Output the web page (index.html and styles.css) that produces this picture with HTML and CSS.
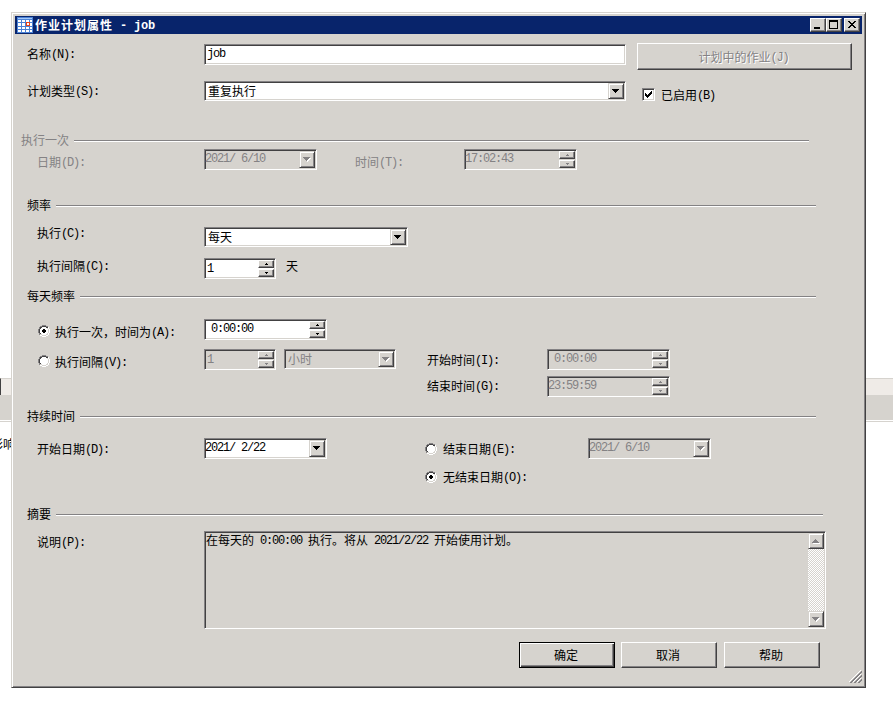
FILE: index.html
```
<!DOCTYPE html>
<html lang="zh-CN">
<head>
    <meta charset="UTF-8">
    <title>作业计划属性 - job</title>
    <link rel="stylesheet" href="styles.css">
</head>
<body>

<!-- window behind the dialog -->
<div class="backdrop">
    <div class="back-header"></div>
    <div class="back-bar"></div>
    <div class="back-text">影响</div>
</div>

<!-- shared glyphs -->
<svg class="defs">
    <symbol id="down" viewBox="0 0 8 5"><path d="M0 0h7v1H0zM1 1h5v1H1zM2 2h3v1H2zM3 3h1v1H3z"/></symbol>
    <symbol id="up" viewBox="0 0 8 5"><path d="M3 0h1v1H3zM2 1h3v1H2zM1 2h5v1H1zM0 3h7v1H0z"/></symbol>
    <symbol id="tiny-up" viewBox="0 0 3 2"><path d="M1 0h1v1H1zM0 1h3v1H0z"/></symbol>
    <symbol id="tiny-down" viewBox="0 0 3 2"><path d="M0 0h3v1H0zM1 1h1v1H1z"/></symbol>
    <symbol id="radio" viewBox="0 0 12 12">
        <path fill="#fff" d="M4 1h4v1h2v2h1v4h-1v2H8v1H4v-1H2V8H1V4h1V2h2z"/>
        <path fill="#848284" d="M4 0h4v1H4zM2 1h2v1H2zM8 1h2v1H8zM1 2h1v2H1zM0 4h1v4H0zM1 8h1v2H1z"/>
        <path fill="#424142" d="M4 1h4v1H4zM2 2h2v1H2zM8 2h2v1H8zM2 3h1v1H2zM1 4h1v4H1zM2 8h1v1H2z"/>
        <path fill="#d6d3ce" d="M9 3h1v1H9zM10 4h1v4h-1zM9 8h1v1H9zM8 9h2v1H8zM4 10h4v1H4zM2 9h2v1H2z"/>
        <path fill="#fff" d="M10 2h1v2h-1zM11 4h1v4h-1zM10 8h1v2h-1zM8 10h2v1H8zM4 11h4v1H4zM2 10h2v1H2z"/>
    </symbol>
</svg>

<div class="window">
    <div class="titlebar">
        <svg class="title-icon" viewBox="0 0 16 16">
            <path fill="#4a82d6" d="M0 0h16v16H0z"/>
            <path fill="#a5c7f7" d="M1 1h14v1H1z"/>
            <path fill="#fff" d="M1 3h3v2H1zM5 3h3v2H5zM9 3h3v2H9zM13 3h2v2h-2zM1 6h3v3H1zM5 6h3v3H5zM9 6h3v3H9zM13 6h2v3h-2zM1 10h3v2H1zM5 10h3v2H5zM9 10h3v2H9zM13 10h2v2h-2zM1 13h3v2H1zM5 13h3v2H5zM9 13h3v2H9zM13 13h2v2h-2z"/>
            <path fill="#e74118" fill-rule="evenodd" d="M9 5h4v4H9zM10 6v2h2V6z"/>
        </svg>
        <span class="title">作业计划属性<span class="en"> - job</span></span>
        <div class="sys-btn"><svg viewBox="0 0 12 10"><path d="M2 7h6v2H2z"/></svg></div>
        <div class="sys-btn"><svg viewBox="0 0 12 10"><path d="M1 0h9v9H1zM2 2v6h7V2z" fill-rule="evenodd"/></svg></div>
        <div class="sys-btn close"><svg viewBox="0 0 12 10"><path d="M2 1h2v1h1v1h2V2h1V1h2v1H9v1H8v1H7v1h1v1h1v1h1v1H8V7H7V6H5v1H4v1H2V7h1V6h1V5h1V4H4V3H3V2H2z"/></svg></div>
    </div>

    <div class="row row-name">
        <div class="label">名称<span class="en">(N):</span></div>
        <div class="field name-input"><span class="en">job</span></div>
        <div class="button jobs-btn disabled">计划中的作业<span class="en">(J)</span></div>
    </div>

    <div class="row row-type">
        <div class="label">计划类型<span class="en">(S):</span></div>
        <div class="field combo type-combo">重复执行<div class="drop"><svg><use href="#down"/></svg></div></div>
        <div class="checkbox"><svg viewBox="0 0 9 9"><path d="M1 3h1v1h1v1h1V4h1V3h1V2h1V1h1v3H7v1H6v1H5v1H4v1H3V7H2V6H1z"/></svg></div>
        <div class="label check-label">已启用<span class="en">(B)</span></div>
    </div>

    <div class="legend legend-once"><span>执行一次</span><i></i></div>
    <div class="row row-once">
        <div class="label">日期<span class="en">(D):</span></div>
        <div class="field date w113 disabled"><span class="en">2021/ 6/10</span><div class="drop"><svg><use href="#down"/></svg></div></div>
        <div class="label once-time">时间<span class="en">(T):</span></div>
        <div class="field date w113 disabled"><span class="en">17:02:43</span><div class="spin"><b><svg><use href="#tiny-up"/></svg></b><b><svg><use href="#tiny-down"/></svg></b></div></div>
    </div>

    <div class="legend"><span>频率</span><i></i></div>
    <div class="row row-exec">
        <div class="label">执行<span class="en">(C):</span></div>
        <div class="field combo exec-combo">每天<div class="drop"><svg><use href="#down"/></svg></div></div>
    </div>
    <div class="row row-interval">
        <div class="label">执行间隔<span class="en">(C):</span></div>
        <div class="field number"><span class="en">1</span><div class="spin"><b><svg><use href="#tiny-up"/></svg></b><b><svg><use href="#tiny-down"/></svg></b></div></div>
        <div class="label unit">天</div>
    </div>

    <div class="legend"><span>每天频率</span><i></i></div>
    <div class="row row-at">
        <svg class="radio"><use href="#radio"/><path d="M5 4h2v1h1v2H7v1H5V7H4V5h1z"/></svg>
        <div class="label radio-label">执行一次，时间为<span class="en">(A):</span></div>
        <div class="field date w123"><span class="en"> 0:00:00</span><div class="spin"><b><svg><use href="#tiny-up"/></svg></b><b><svg><use href="#tiny-down"/></svg></b></div></div>
    </div>
    <div class="row row-every">
        <svg class="radio"><use href="#radio"/></svg>
        <div class="label radio-label">执行间隔<span class="en">(V):</span></div>
        <div class="field number disabled"><span class="en">1</span><div class="spin"><b><svg><use href="#tiny-up"/></svg></b><b><svg><use href="#tiny-down"/></svg></b></div></div>
        <div class="field combo unit-combo disabled">小时<div class="drop"><svg><use href="#down"/></svg></div></div>
        <div class="label range-label">开始时间<span class="en">(I):</span></div>
        <div class="field date w123 disabled"><span class="en"> 0:00:00</span><div class="spin"><b><svg><use href="#tiny-up"/></svg></b><b><svg><use href="#tiny-down"/></svg></b></div></div>
    </div>
    <div class="row row-until">
        <div class="label range-label">结束时间<span class="en">(G):</span></div>
        <div class="field date w123 disabled"><span class="en">23:59:59</span><div class="spin"><b><svg><use href="#tiny-up"/></svg></b><b><svg><use href="#tiny-down"/></svg></b></div></div>
    </div>

    <div class="legend"><span>持续时间</span><i></i></div>
    <div class="row row-start">
        <div class="label">开始日期<span class="en">(D):</span></div>
        <div class="field date w123"><span class="en">2021/ 2/22</span><div class="drop"><svg><use href="#down"/></svg></div></div>
        <svg class="radio"><use href="#radio"/></svg>
        <div class="label end-label">结束日期<span class="en">(E):</span></div>
        <div class="field date w123 disabled"><span class="en">2021/ 6/10</span><div class="drop"><svg><use href="#down"/></svg></div></div>
    </div>
    <div class="row row-noend">
        <svg class="radio"><use href="#radio"/><path d="M5 4h2v1h1v2H7v1H5V7H4V5h1z"/></svg>
        <div class="label end-label">无结束日期<span class="en">(O):</span></div>
    </div>

    <div class="legend legend-summary"><span>摘要</span><i></i></div>
    <div class="row row-desc">
        <div class="label">说明<span class="en">(P):</span></div>
        <div class="field desc">
            <div class="desc-text">在每天的<span class="en"> 0:00:00 </span>执行。将从<span class="en"> 2021/2/22 </span>开始使用计划。</div>
            <div class="scrollbar">
                <div class="drop"><svg><use href="#up"/></svg></div>
                <div class="drop"><svg><use href="#down"/></svg></div>
            </div>
        </div>
    </div>

    <div class="buttons">
        <div class="button default">确定</div>
        <div class="button">取消</div>
        <div class="button help">帮助</div>
    </div>

    <svg class="grip" viewBox="0 0 13 13">
        <path stroke="#fff" d="M0 12L12 0M4 12l8-8M8 12l4-4"/>
        <path stroke="#848284" stroke-width="1.500" d="M1.500 13L13 1.500M5.500 13L13 5.500M9.500 13L13 9.500"/>
    </svg>
</div>

</body>
</html>
```
FILE: styles.css
```
* {
    box-sizing: border-box;
}
body {
    margin: 0;
    height: 704px;
    overflow: hidden;
    background: #fff;
    color: #000;
    font: 12px/20px "Noto Sans CJK SC", sans-serif;
    white-space: nowrap;
}
svg {
    display: block;
    shape-rendering: crispEdges;
}
.defs {
    position: absolute;
    width: 0;
    height: 0;
}
.en {
    font-family: "Liberation Mono", monospace;
    letter-spacing: -1.2px;
    line-height: 1;
    vertical-align: 1px;
    white-space: pre;
}

/* window behind */
.backdrop {
    position: absolute;
    top: 378px;
    left: 0;
    width: 893px;
    overflow: hidden;
}
.back-header {
    height: 17px;
    background: #efebe7;
    border-top: 1px solid #d6d3ce;
    border-left: 1px solid #424142;
}
.back-bar {
    height: 27px;
    background: #d6d3ce;
    border-bottom: 1px solid #d6d3ce;
    box-shadow: inset 0 -1px #fff;
}
.back-text {
    margin: 12px 0 0 -9px;
}

/* dialog frame */
.window {
    position: absolute;
    left: 11px;
    top: 12px;
    width: 855px;
    height: 676px;
    padding: 3px;
    background: #d6d3ce;
    border: 1px solid;
    border-color: #d6d3ce #424142 #424142 #d6d3ce;
    box-shadow: inset 1px 1px #fff, inset -1px -1px #848284;
}
.titlebar {
    display: flex;
    height: 18px;
    padding: 0 2px;
    background: #08246b;
    color: #fff;
    font-weight: bold;
}
.title-icon {
    width: 16px;
    height: 16px;
    margin-top: 1px;
}
.title {
    flex: 1;
    padding-left: 2px;
    line-height: 18px;
    letter-spacing: 1px;
}
.title .en {
    letter-spacing: -0.2px;
}
.sys-btn {
    width: 16px;
    height: 14px;
    margin-top: 2px;
    padding: 2px;
    background: #d6d3ce;
    border: 1px solid;
    border-color: #fff #424142 #424142 #fff;
    box-shadow: inset -1px -1px #848284;
}
.sys-btn svg {
    width: 12px;
    height: 10px;
    margin: -1px 0 0 -1px;
}
.close {
    margin-left: 2px;
}

/* rows */
.row {
    display: flex;
    align-items: flex-start;
}
.label {
    width: 189px;
    padding-left: 22px;
    line-height: 20px;
    flex: none;
}
.radio {
    flex: none;
    width: 12px;
    height: 12px;
    margin-left: 23px;
}
.radio-label {
    width: 154px;
    padding-left: 5px;
}
.legend {
    display: flex;
    height: 18px;
    margin-right: 46px;
    padding-left: 12px;
    line-height: 18px;
}
.legend i {
    flex: 1;
    height: 2px;
    margin: 9px 0 0 5px;
    background: #fff;
    border-top: 1px solid #848284;
}
.legend-once {
    margin-right: 53px;
    padding-left: 6px;
    color: #848284;
}
.legend-summary {
    margin-right: 39px;
}

/* fields */
.field {
    display: flex;
    flex: none;
    height: 21px;
    padding: 1px;
    background: #fff;
    border: 1px solid;
    border-color: #848284 #fff #fff #848284;
    box-shadow: inset 1px 1px #424142, inset -1px -1px #d6d3ce;
    line-height: 15px;
}
.field > .en {
    line-height: 17px;
}
.field.disabled {
    background: #d6d3ce;
    color: #848284;
}
.combo {
    height: 20px;
    padding-left: 3px;
    line-height: 16px;
}
.number {
    width: 72px;
}
.number > .en {
    padding-left: 1px;
    line-height: 18px;
}
.date {
    padding-left: 0;
}
.w113 {
    width: 113px;
}
.w123 {
    width: 123px;
}
.drop {
    width: 16px;
    height: 100%;
    margin-left: auto;
    background: #d6d3ce;
    border: 1px solid;
    border-color: #d6d3ce #424142 #424142 #d6d3ce;
    box-shadow: inset 1px 1px #fff, inset -1px -1px #848284;
}
.drop svg {
    width: 8px;
    height: 5px;
    margin: 5px 0 0 3px;
}
.disabled .drop svg,
.scrollbar svg {
    fill: #848284;
    filter: drop-shadow(1px 1px 0 #fff);
}
.spin {
    width: 16px;
    margin-left: auto;
}
.spin b {
    display: block;
    height: 8px;
    background: #d6d3ce;
    border: 1px solid;
    border-color: #fff #424142 #424142 #fff;
    box-shadow: inset -1px -1px #848284;
}
.spin b + b {
    margin-top: 1px;
}
.spin svg {
    width: 3px;
    height: 2px;
    margin: 2px 0 0 6px;
}
.disabled .spin svg {
    fill: #848284;
}

.row-name {
    height: 42px;
}
.row-name .label {
    margin-top: 10px;
    padding-left: 12px;
}
.name-input {
    width: 422px;
    margin-top: 10px;
    padding-left: 2px;
}
.row-type {
    height: 55px;
}
.row-type .label {
    margin-top: 5px;
    padding-left: 12px;
}
.type-combo {
    width: 422px;
    margin-top: 5px;
}
.checkbox {
    width: 13px;
    height: 13px;
    margin: 12px 0 0 16px;
    padding: 1px;
    background: #fff;
    border: 1px solid;
    border-color: #848284 #fff #fff #848284;
    box-shadow: inset 1px 1px #424142, inset -1px -1px #d6d3ce;
}
.checkbox svg {
    width: 9px;
    height: 9px;
}
.row-type .check-label {
    width: auto;
    margin-top: 9px;
    padding-left: 6px;
}
.row-once {
    height: 47px;
    color: #848284;
}
.row-once .label {
    margin-top: 3px;
}
.row-once .once-time {
    width: 147px;
    padding-left: 38px;
}
.row-exec {
    height: 34px;
}
.row-exec .label {
    margin-top: 9px;
}
.exec-combo {
    width: 204px;
    margin-top: 13px;
}
.row-interval {
    height: 39px;
}
.row-interval .label {
    margin-top: 8px;
}
.row-interval .field {
    margin-top: 10px;
}
.unit {
    width: auto;
    padding-left: 10px;
}
.row-at {
    height: 40px;
}
.row-at .radio {
    margin-top: 20px;
}
.row-at .label {
    margin-top: 17px;
}
.row-at .field {
    margin-top: 14px;
}
.row-every {
    height: 28px;
}
.row-every .radio {
    margin-top: 10px;
}
.row-every .label {
    margin-top: 7px;
}
.row-every .field {
    margin-top: 4px;
}
.unit-combo {
    width: 112px;
    margin-left: 8px;
}
.row .range-label {
    width: 151px;
    padding-left: 31px;
}
.row-every .range-label {
    margin-top: 5px;
}
.row-until {
    height: 34px;
    padding: 3px 0 0 381px;
}
.row-start {
    height: 38px;
}
.row-start .label {
    margin-top: 14px;
}
.row-start .field {
    margin-top: 13px;
}
.row-start .radio {
    margin: 18px 0 0 98px;
}
.end-label {
    width: 151px;
    padding-left: 6px;
}
.row-noend {
    height: 42px;
    padding: 4px 0 0 387px;
}
.row-noend .radio {
    margin-top: 4px;
}

/* summary */
.row-desc {
    height: 113px;
}
.row-desc .label {
    margin-top: 9px;
}
.desc {
    width: 622px;
    height: 98px;
    margin-top: 8px;
    background: #d6d3ce;
}
.desc-text {
    flex: 1;
    line-height: 14px;
}
.scrollbar {
    display: flex;
    flex-direction: column;
    justify-content: space-between;
    width: 16px;
    background: repeating-conic-gradient(#fff 0 25%, #d6d3ce 0 50%) 0 0 / 2px 2px;
}
.scrollbar .drop {
    height: 16px;
}

/* buttons */
.button {
    width: 96px;
    height: 26px;
    padding-right: 2px;
    background: #d6d3ce;
    border: 1px solid;
    border-color: #fff #424142 #424142 #fff;
    box-shadow: inset -1px -1px #848284;
    text-align: center;
    line-height: 24px;
}
.jobs-btn {
    width: 215px;
    height: 27px;
    margin: 9px 0 0 11px;
    line-height: 25px;
}
.button.disabled {
    color: #848284;
    text-shadow: 1px 1px #fff;
}
.default {
    border-color: #000;
    box-shadow: inset 1px 1px #fff, inset -1px -1px #424142, inset -2px -2px #848284;
}
.buttons {
    display: flex;
    gap: 6px;
    padding: 6px 0 0 504px;
}
.help {
    margin-left: 1px;
}
.grip {
    width: 13px;
    height: 13px;
    margin: 2px 0 0 auto;
}
```
